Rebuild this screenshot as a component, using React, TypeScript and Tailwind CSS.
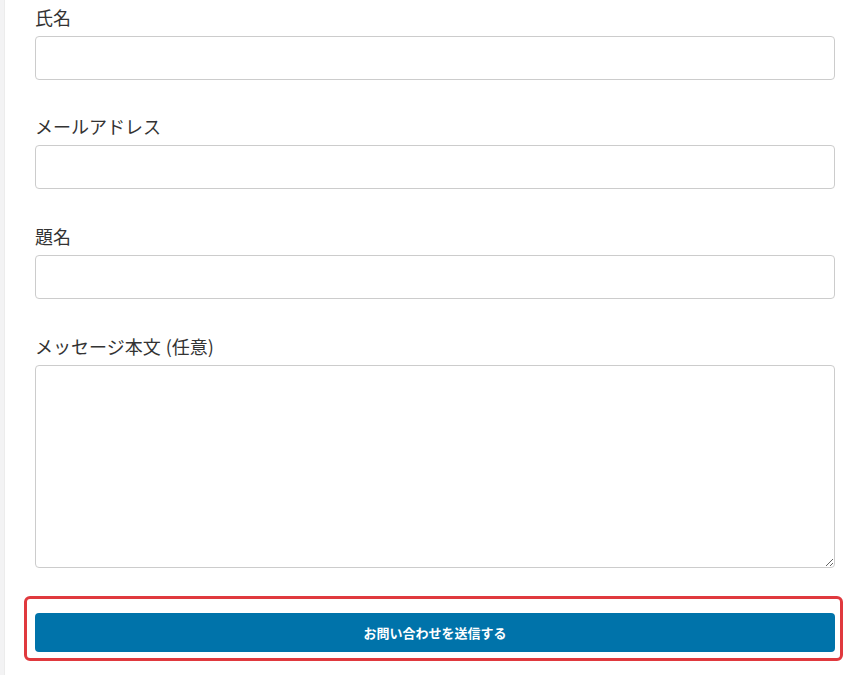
import React from "react";

const labelCls =
  "block text-[18px] leading-[28px] text-[#333333] mb-[5px]";
const inputCls =
  "block w-[800px] h-[44px] border border-[#cccccc] rounded-[4px] bg-white px-3 text-[16px] outline-none";

export default function App() {
  return (
    <div
      className="flex min-h-[675px] bg-white"
      style={{ fontFamily: '"Noto Sans CJK JP", "Noto Sans", sans-serif' }}
    >
      <div className="w-[5px] shrink-0 bg-[#f3f3f4] border-r border-[#ececec]" />
      <form className="pl-[30px] pt-[3px] flex flex-col">
        <div>
          <label className={labelCls}>氏名</label>
          <input type="text" className={inputCls} />
        </div>
        <div className="mt-[32px]">
          <label className={labelCls}>メールアドレス</label>
          <input type="email" className={inputCls} />
        </div>
        <div className="mt-[33px]">
          <label className={labelCls}>題名</label>
          <input type="text" className={inputCls} />
        </div>
        <div className="mt-[33px]">
          <label className={labelCls}>
            メッセージ本文<span className="ml-[5px]">(任意)</span>
          </label>
          <textarea className="block w-[800px] h-[203px] border border-[#cccccc] rounded-[4px] bg-white px-3 py-2 text-[16px] outline-none" />
        </div>
        <div className="relative mt-[45px]">
          <button
            type="button"
            className="block w-[800px] h-[39px] rounded-[4px] bg-[#0073aa] text-white text-[13px] font-bold"
          >
            お問い合わせを送信する
          </button>
          <div className="absolute left-[-11px] top-[-17px] w-[819px] h-[65px] border-[3.5px] border-[#e0393e] rounded-[6px] pointer-events-none" />
        </div>
      </form>
    </div>
  );
}
